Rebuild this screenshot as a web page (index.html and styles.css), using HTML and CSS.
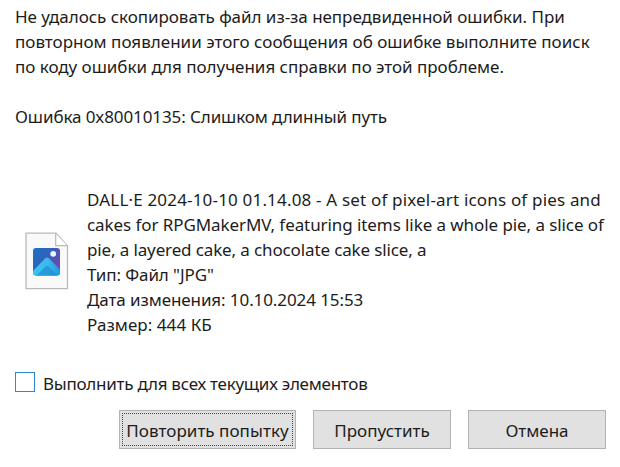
FILE: index.html
```
<!DOCTYPE html>
<html lang="ru">
<head>
<meta charset="utf-8">
<title>Копирование файла</title>
<link rel="stylesheet" href="styles.css">
</head>
<body>
<main class="dialog">
  <p class="message">
    <span class="line m1">Не удалось скопировать файл из-за непредвиденной ошибки. При</span>
    <span class="line m2">повторном появлении этого сообщения об ошибке выполните поиск</span>
    <span class="line m3">по коду ошибки для получения справки по этой проблеме.</span>
  </p>
  <p class="code">Ошибка 0x80010135: Слишком длинный путь</p>
  <section class="file">
    <svg class="file-icon" width="44" height="58" viewBox="0 0 44 58" aria-hidden="true">
      <defs>
        <linearGradient id="sky" x1="0" y1="0" x2="1" y2=".7">
          <stop offset="0" stop-color="#1673c2"/>
          <stop offset=".5" stop-color="#3560ba"/>
          <stop offset="1" stop-color="#7a45ad"/>
        </linearGradient>
        <linearGradient id="hill" x1="0" y1="0" x2="1" y2="0">
          <stop offset="0" stop-color="#35c6ee"/>
          <stop offset=".5" stop-color="#3fb8ec"/>
          <stop offset="1" stop-color="#1c94da"/>
        </linearGradient>
        <clipPath id="tile"><rect x="8" y="16" width="27" height="27.5" rx="3"/></clipPath>
      </defs>
      <path d="M1 1.2H31L42.5 14V56.7H1Z" fill="#f9f9f9" stroke="#b9b9b9" stroke-width="1.3"/>
      <path d="M30.7 1.5V13.7H42.3" fill="#fff" stroke="#b9b9b9" stroke-width="1.2"/>
      <g clip-path="url(#tile)">
        <path d="M8 16H35V44H8Z" fill="url(#sky)"/>
        <path d="M8 39L20.3 26.3Q22 24.6 23.8 26.3L37 39.5V46H8Z" fill="url(#hill)"/>
        <path d="M11 44L20.5 34.5Q22 33 23.5 34.5L33 44Z" fill="#1482cc" opacity=".55"/>
      </g>
      <circle cx="28.2" cy="21.8" r="2.9" fill="#e8f7fc"/>
    </svg>
    <div class="details">
      <span class="line d1">DALL·E 2024-10-10 01.14.08 - A set of pixel-art icons of pies and</span>
      <span class="line d2">cakes for RPGMakerMV, featuring items like a whole pie, a slice of</span>
      <span class="line d3">pie, a layered cake, a chocolate cake slice, a</span>
      <span class="line d4">Тип: Файл "JPG"</span>
      <span class="line d5">Дата изменения: 10.10.2024 15:53</span>
      <span class="line d6">Размер: 444 КБ</span>
    </div>
  </section>
  <label class="apply-all"><input class="check" type="checkbox"><span>Выполнить для всех текущих элементов</span></label>
  <div class="actions">
    <button class="button primary"><span class="focus">Повторить попытку</span></button>
    <button class="button">Пропустить</button>
    <button class="button">Отмена</button>
  </div>
</main>
</body>
</html>
```
FILE: styles.css
```
* { box-sizing: border-box; }
body {
  margin: 0;
  background: #fff;
  color: #1c1c1c;
  font: 17px/25px "Noto Sans", "Open Sans", sans-serif;
}
.dialog {
  height: 467px;
  padding: 4px 14px 0 15px;
  overflow: hidden;
}
.message, .code { margin: 0; }
.line { display: block; white-space: nowrap; }
.m1 { letter-spacing: -.04px; }
.m2 { letter-spacing: .01px; }
.m3 { letter-spacing: -.03px; }
.code { margin-top: 25px; letter-spacing: -.1px; }
.file {
  display: flex;
  align-items: center;
  gap: 18px;
  margin-top: 58px;
  padding-left: 10px;
}
.file-icon { flex: none; margin-top: -2px; }
.d1 { letter-spacing: .18px; }
.d2 { letter-spacing: -.08px; }
.d3 { letter-spacing: -.13px; }
.d4 { letter-spacing: -.1px; }
.d5 { letter-spacing: -.09px; }
.d6 { letter-spacing: .06px; }
.apply-all {
  display: flex;
  gap: 8px;
  margin-top: 34px;
  letter-spacing: -.25px;
}
.check {
  appearance: none;
  width: 20px;
  height: 20px;
  margin: 1px 0 0;
  border: 1px solid #2b86d3;
  background: #fff;
}
.actions {
  display: flex;
  justify-content: flex-end;
  gap: 17px;
  margin-top: 14px;
}
.button {
  width: 138px;
  height: 39px;
  padding: 2px 0 0;
  border: 1px solid #b2b2b2;
  background: #e1e1e1;
  color: inherit;
  font: inherit;
}
.primary {
  width: 177px;
  padding: 2px;
  letter-spacing: .05px;
}
.focus {
  display: block;
  height: 33px;
  padding-top: 4px;
  border: 1px dotted #444;
  white-space: nowrap;
}
```
